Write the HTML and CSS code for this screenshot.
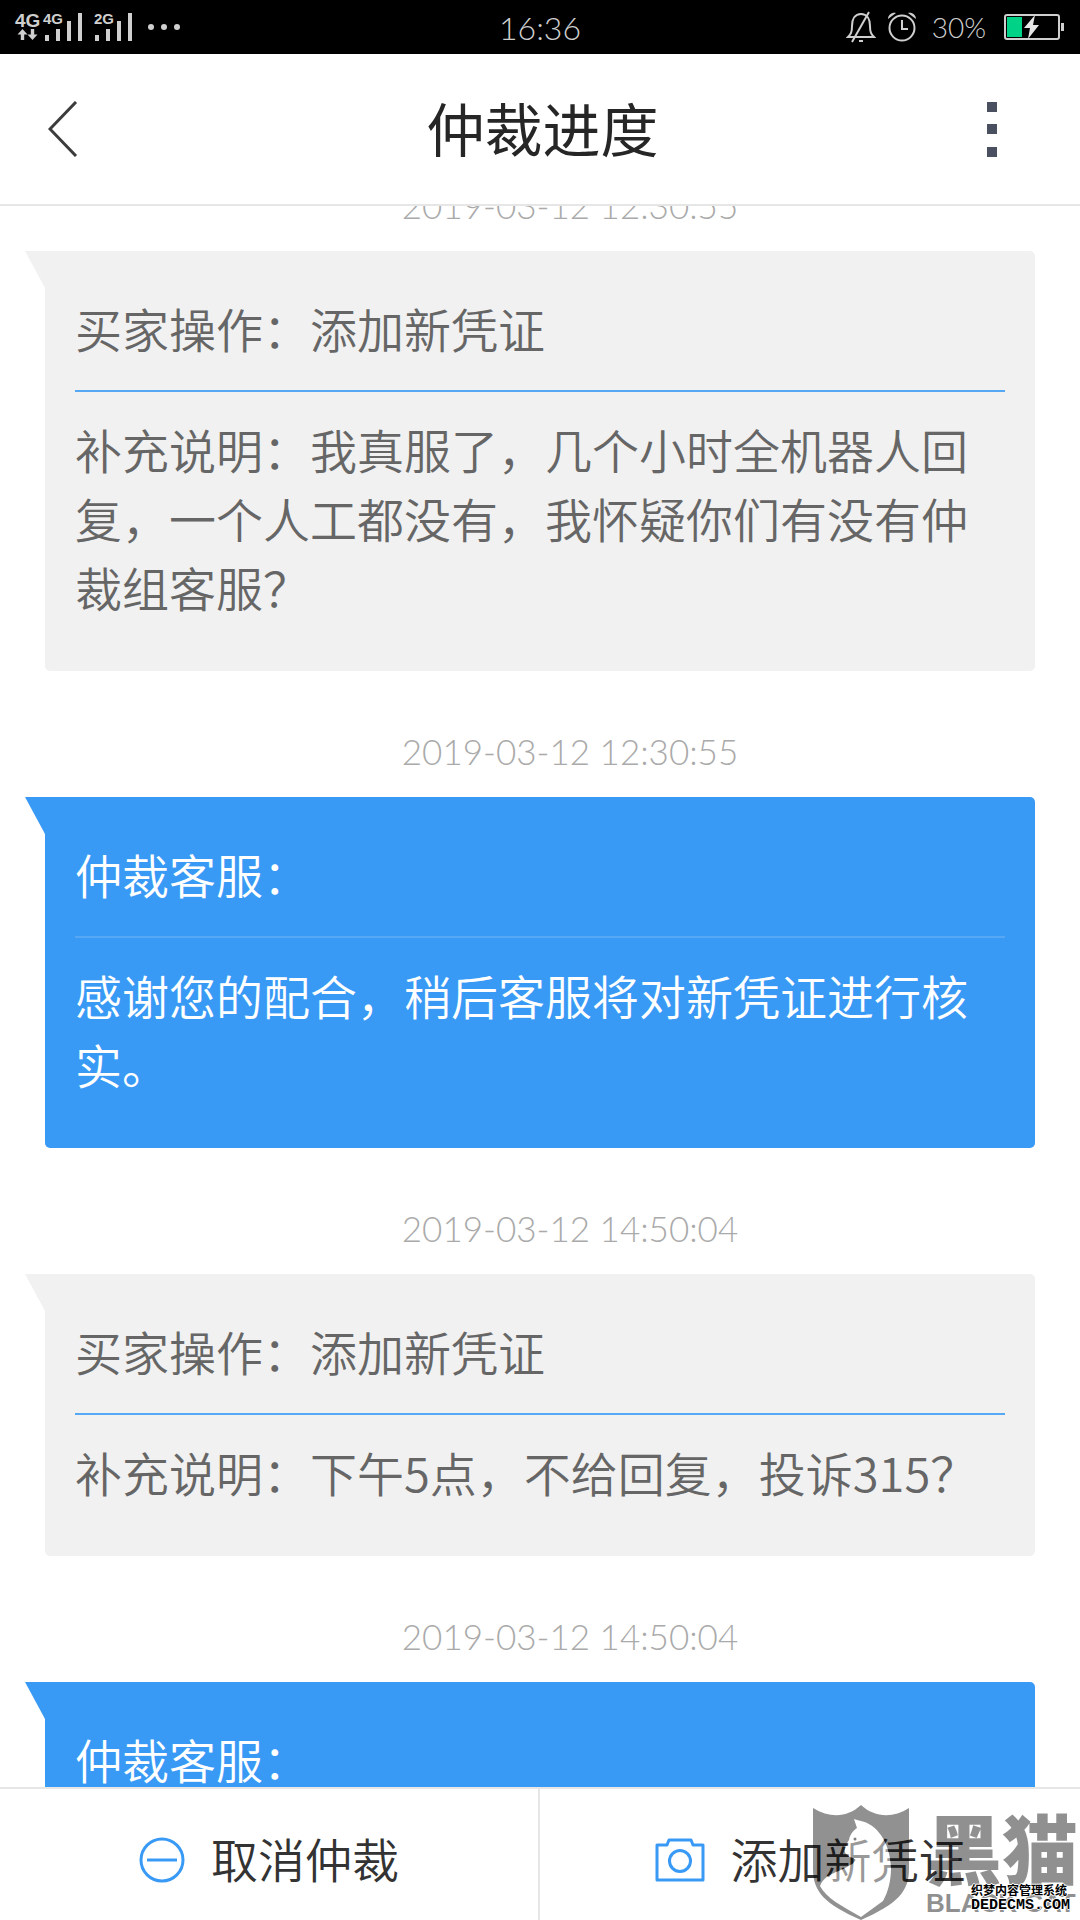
FILE: index.html
```html
<!DOCTYPE html>
<html lang="zh-CN">
<head>
  <meta charset="UTF-8">
  <meta name="viewport" content="width=device-width, initial-scale=1.0">
  <title>仲裁进度</title>
  <link rel="stylesheet" href="styles.css">
</head>
<body>

<!-- Status bar -->
<div class="status-bar">
  <svg class="signal" width="190" height="54" viewBox="0 0 190 54">
    <text x="15" y="27" font-size="19">4G</text>
    <text x="43" y="24" font-size="15">4G</text>
    <text x="94" y="24" font-size="15">2G</text>
    <path d="M22.500 29l5 5.500h-3.300V40h-3.400v-5.500h-3.300zM32.500 40l5-5.500h-3.300V29h-3.400v5.500h-3.300z"/>
    <path d="M45 35h4v6h-4zM56 29h4v12h-4zM67 21h4v20h-4zM78 13h4v28h-4z"/>
    <path d="M95 35h4v6h-4zM106 29h4v12h-4zM117 21h4v20h-4zM128 13h4v28h-4z"/>
    <circle cx="151" cy="27" r="3"/>
    <circle cx="164" cy="27" r="3"/>
    <circle cx="177" cy="27" r="3"/>
  </svg>
  <span class="clock">16:36</span>
  <div class="status-right">
    <svg width="30" height="32" viewBox="0 0 30 32" fill="none" stroke="#cfcfcf" stroke-width="2">
      <path d="M2 26c3-3 4-5 4-11 0-7 3-12 9-12s9 5 9 12c0 6 1 8 4 11zM23 1L6 31M13 30h4"/>
    </svg>
    <svg width="28" height="30" viewBox="0 0 28 30" fill="none" stroke="#cfcfcf" stroke-width="2">
      <circle cx="14" cy="16" r="12.500"/>
      <path d="M14 8v9h6"/>
      <path d="M0 7c0-4 4-7 8-6zM28 7c0-4-4-7-8-6z" fill="#cfcfcf" stroke="none"/>
    </svg>
    <span class="percent">30%</span>
    <svg width="60" height="26" viewBox="0 0 60 26">
      <rect x="1" y="1" width="54" height="24" rx="2" fill="none" stroke="#cfcfcf" stroke-width="2"/>
      <path d="M57 9h3v8h-3z" fill="#cfcfcf"/>
      <path d="M3 3h15v20H3z" fill="#00d287"/>
      <path d="M31 1L20 14h6l-2 11 11-14h-6z" fill="#e6e6e6"/>
    </svg>
  </div>
</div>

<header class="header">
  <button class="icon-btn" aria-label="返回">
    <svg width="30" height="56" viewBox="0 0 30 56" fill="none" stroke="#3c3c3c" stroke-width="3">
      <path d="M28 1L2 28l26 27"/>
    </svg>
  </button>
  <h1>仲裁进度</h1>
  <button class="icon-btn" aria-label="更多">
    <svg width="10" height="56" viewBox="0 0 10 56" fill="#4a5060">
      <path d="M0 1h10v10H0zM0 23h10v10H0zM0 46h10v10H0z"/>
    </svg>
  </button>
</header>

<main class="chat">
  <time class="time">2019-03-12 12:30:55</time>
  <section class="bubble">
    <h2>买家操作：添加新凭证</h2>
    <p>补充说明：我真服了，几个小时全机器人回复，一个人工都没有，我怀疑你们有没有仲裁组客服？</p>
  </section>

  <time class="time">2019-03-12 12:30:55</time>
  <section class="bubble service">
    <h2>仲裁客服：</h2>
    <p>感谢您的配合，稍后客服将对新凭证进行核实。</p>
  </section>

  <time class="time">2019-03-12 14:50:04</time>
  <section class="bubble">
    <h2>买家操作：添加新凭证</h2>
    <p>补充说明：下午5点，不给回复，投诉315？</p>
  </section>

  <time class="time">2019-03-12 14:50:04</time>
  <section class="bubble service">
    <h2>仲裁客服：</h2>
  </section>
</main>

<footer class="actions">
  <button>
    <svg width="46" height="46" viewBox="0 0 46 46" fill="none" stroke="#399af6" stroke-width="3">
      <circle cx="23" cy="23" r="21"/>
      <path d="M8 23h30"/>
    </svg>
    <span>取消仲裁</span>
  </button>
  <button>
    <svg width="50" height="44" viewBox="0 0 50 44" fill="none" stroke="#399af6" stroke-width="3" stroke-linejoin="round">
      <path d="M2 7h10l2-5h22l2 5h10v35H2z"/>
      <circle cx="25" cy="23" r="10.500"/>
    </svg>
    <span>添加新凭证</span>
  </button>

  <div class="watermark">
    <svg width="98" height="115" viewBox="0 0 98 115">
      <!-- cat body, see-through white -->
      <path d="M42 14l3 4 4-2c15 3 29 20 30 47 0 13-3 24-8 33L49 112C30 101 14 93 8 81c6-15 25-14 36-25 2-3-3-2-7-5-5-4-4-8 2-16 1-6 4-10 7-12z" fill="#fff" opacity=".5"/>
      <!-- shield round the cat -->
      <path fill-rule="evenodd" opacity=".43" d="M1 3c18 11 35 9 48-3 13 12 31 14 48 3v61c0 23-12 35-48 51C13 99 1 87 1 64zM42 14l3 9c-3 2-7 6-8 12-5 8-6 12-1 16 4 3 9 2 7 5C33 67 14 66 8 81c6 12 22 20 41 31l22-16c5-9 8-20 8-33-1-27-15-44-30-47l-4-1z"/>
      <circle cx="43" cy="34" r="1.500" opacity=".5"/>
    </svg>
    <div class="brand">
      <span class="brand-cn">黑猫</span>
      <span class="brand-en">BLACK CAT</span>
    </div>
    <div class="cms">
      <span>织梦内容管理系统</span>
      <span class="cms-url">DEDECMS.COM</span>
    </div>
  </div>
</footer>

</body>
</html>
```
FILE: styles.css
```css
* { box-sizing: border-box; }

body {
  margin: 0;
  height: 100vh;
  display: flex;
  flex-direction: column;
  overflow: hidden;
  background: #fff;
  color: #666;
  font-family: "Noto Sans CJK SC", sans-serif;
  font-weight: 350;
}

button {
  border: none;
  background: none;
  padding: 0;
  font: inherit;
  color: inherit;
  cursor: pointer;
}

svg {
  display: block;
  flex: none;
}

h1, h2, p { margin: 0; font-weight: 350; }

/* Status bar */
.status-bar {
  flex: none;
  display: grid;
  grid-template-columns: 1fr auto 1fr;
  align-items: center;
  height: 54px;
  background: #000;
  color: #cfcfcf;
  font-family: Lato, sans-serif;
  font-size: 32px;
  font-weight: 300;
}

.signal {
  fill: #cfcfcf;
  font-family: "Liberation Sans", sans-serif;
  font-weight: bold;
}

.status-right {
  display: flex;
  justify-content: flex-end;
  align-items: center;
  gap: 12px;
  padding-right: 16px;
}

.percent {
  margin: 0 6px 0 4px;
  font-size: 28px;
}

/* Header */
.header {
  flex: none;
  display: flex;
  align-items: center;
  justify-content: space-between;
  height: 152px;
  padding: 0 83px 0 48px;
  border-bottom: 2px solid #e6e6e6;
}

.header h1 {
  margin-left: 20px;
  padding-bottom: 4px;
  font-size: 58px;
  line-height: 80px;
  font-weight: 400;
  color: #262626;
}

/* Messages */
.chat {
  flex: 1;
  min-height: 0;
  padding: 0 45px;
  overflow: hidden;
}

.time {
  display: block;
  padding: 60px 0 26px 60px;
  font-family: Lato, sans-serif;
  font-size: 35px;
  font-weight: 300;
  line-height: 40px;
  text-align: center;
  color: #aaa;
}

.time:first-child { margin-top: -81px; }

.bubble {
  position: relative;
  padding: 0 30px 50px;
  border-radius: 0 5px 5px 5px;
  background: #f1f1f1;
}

.bubble::before {
  content: "";
  position: absolute;
  top: 0;
  left: -20px;
  width: 20px;
  height: 37px;
  background: inherit;
  clip-path: polygon(0 0, 100% 0, 100% 100%);
}

.bubble h2 {
  padding: 46px 0 31px;
  border-bottom: 2px solid #56a8f5;
  font-size: 47px;
  line-height: 62px;
}

.bubble p {
  padding-top: 22px;
  font-size: 47px;
  line-height: 69px;
}

.service {
  background: #399af6;
  color: #fff;
}

/* Bottom buttons */
.actions {
  position: relative;
  flex: none;
  display: grid;
  grid-template-columns: 1fr 1fr;
  height: 133px;
  border-top: 2px solid #e6e6e6;
  background: #fff;
}

.actions button {
  display: flex;
  align-items: center;
  justify-content: center;
  gap: 26px;
  padding-top: 10px;
  font-size: 47px;
  line-height: 64px;
  color: #333;
}

.actions button span { padding-bottom: 4px; }

.actions button:first-child { border-right: 2px solid #e6e6e6; }

/* Watermark */
.watermark {
  position: absolute;
  right: 2px;
  bottom: 0;
  display: flex;
  gap: 16px;
  pointer-events: none;
}

.brand {
  display: flex;
  flex-direction: column;
  color: #000;
  opacity: .43;
}

.brand-cn {
  font-size: 76px;
  font-weight: 900;
  line-height: 82px;
}

.brand-en {
  font-family: "Liberation Sans", sans-serif;
  font-size: 26px;
  font-weight: bold;
  line-height: 32px;
}

.cms {
  position: absolute;
  right: 8px;
  bottom: 6px;
  display: flex;
  flex-direction: column;
  color: #000;
  font-size: 12px;
  font-weight: bold;
  line-height: 16px;
  text-shadow: 1px 0 #fff, -1px 0 #fff, 0 1px #fff, 0 -1px #fff;
}

.cms-url {
  font-family: "Liberation Mono", monospace;
  font-size: 15px;
}
```
